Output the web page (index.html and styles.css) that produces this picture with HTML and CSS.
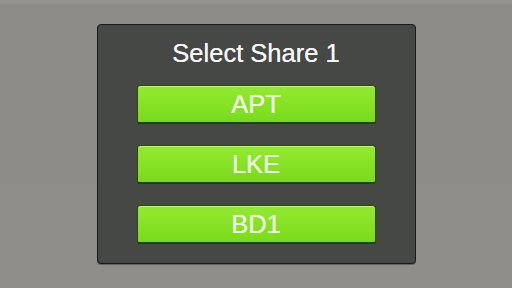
FILE: index.html
```html
<!DOCTYPE html>
<html>
<head>
<meta charset="utf-8">
<link rel="stylesheet" href="styles.css">
</head>
<body>
<div class="screen">
  <div class="dialog">
    <div class="title">Select Share 1</div>
    <div class="options">
      <button class="btn">APT</button>
      <button class="btn">LKE</button>
      <button class="btn">BD1</button>
    </div>
  </div>
</div>
</body>
</html>
```

FILE: styles.css
```css
html, body {
  margin: 0;
  padding: 0;
}
body {
  width: 512px;
  height: 288px;
  overflow: hidden;
  background: #8d8c88;
  font-family: "Liberation Sans", Arial, sans-serif;
}
.screen {
  width: 512px;
  height: 288px;
  display: flex;
  align-items: center;
  justify-content: center;
  background:
    linear-gradient(to bottom, #93928e 0, #93928e 4px, #8a8985 5px, #8d8c88 6px, #8d8c88 186px, #8f8e8a 188px, #8f8e8a 288px);
}
.dialog {
  box-sizing: border-box;
  width: 319px;
  height: 240px;
  background: #464846;
  border: 1px solid #191a19;
  border-radius: 4px;
  box-shadow: 0 1px 0 rgba(0,0,0,0.3);
  display: flex;
  flex-direction: column;
  align-items: center;
  padding-top: 14px;
}
.title {
  color: #f6f6f4;
  font-size: 25.5px;
  line-height: 28px;
  height: 28px;
  margin-bottom: 18px;
  text-shadow: 0 0 0.5px #f6f6f4;
}
.options {
  display: flex;
  flex-direction: column;
  gap: 21px;
}
.btn {
  box-sizing: border-box;
  width: 239px;
  height: 39px;
  margin: 0;
  padding: 0;
  border: 1px solid #2b4a10;
  border-bottom: 2px solid #25400d;
  border-radius: 3px;
  background: linear-gradient(to bottom, #92ea2e 0%, #88e326 45%, #7ada1c 100%);
  box-shadow: inset 0 1px 0 rgba(220,255,170,0.55);
  color: #f2faea;
  font-family: "Liberation Sans", Arial, sans-serif;
  font-size: 25.5px;
  line-height: 25px;
  text-shadow: 0 0 0.5px #f2faea;
  display: flex;
  align-items: center;
  justify-content: center;
}
```
